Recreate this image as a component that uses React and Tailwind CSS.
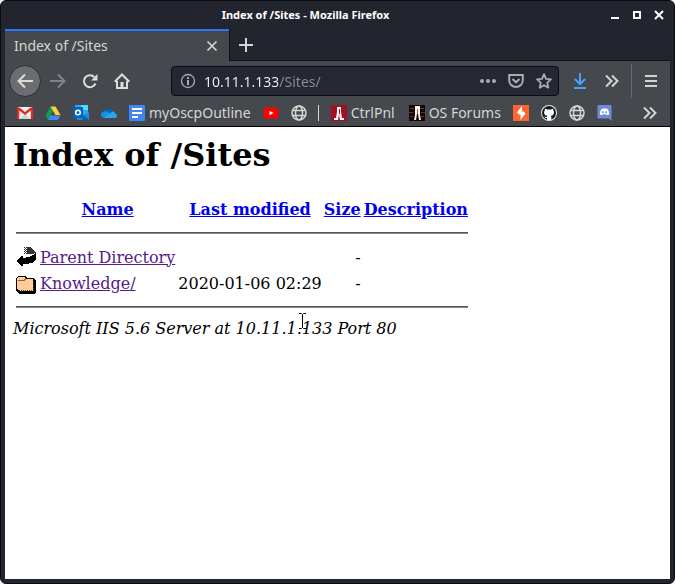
import React from "react";

const Gmail = () => (
  <svg width="16" height="16" viewBox="0 0 16 16">
    <path fill="#eceff1" d="M1 2h14v12H1z" />
    <path fill="#cfd3d6" d="M3 14l5-5 5 5z" />
    <path fill="#d93025" d="M1 2.500h1.500L8 7l5.500-4.500H15c.6 0 1 .4 1 1V14h-2.200V5.500L8 10 2.200 5.500V14H0V3.500c0-.6.4-1 1-1z" />
  </svg>
);
const Drive = () => (
  <svg width="16" height="16" viewBox="0 0 16 16">
    <path fill="#0f9d58" d="M5.500 1.500L8.200 6 3 15 .5 10.500z" />
    <path fill="#ffcd40" d="M5.500 1.500h5L15.500 10H10.500z" />
    <path fill="#4285f4" d="M5.500 10.500h10L13 15H3z" />
  </svg>
);
const Outlook = () => (
  <svg width="16" height="16" viewBox="0 0 16 16">
    <path fill="#28a8ea" d="M2 0h13v10H2z" />
    <path fill="#50d9ff" d="M8 0h7v5H8z" />
    <path fill="#1490df" d="M4 8l6 3 6-4v8H4z" />
    <path fill="#0a5fa8" d="M11 10l5 5H9z" />
    <rect y="2" width="10" height="11" rx="1" fill="#0364b8" />
    <circle cx="5" cy="7.500" r="2.300" fill="none" stroke="#fff" strokeWidth="1.500" />
  </svg>
);
const OneDrive = () => (
  <svg width="16" height="16" viewBox="0 0 16 16">
    <path fill="#0364b8" d="M3.500 6.500C5 3 10 2 12 6.500L8 10z" />
    <path fill="#1490df" d="M4 6.300c2-.5 4 1 6 2.200L4 13C1 13 0 11.500 0 9.700 0 8 1.500 6.300 4 6.300z" />
    <path fill="#28a8ea" d="M3 12.800L10 8c1-2 3.500-2 4 .5 3 .5 2.500 4.500 0 4.500H4z" />
  </svg>
);
const Docs = () => (
  <svg width="16" height="16" viewBox="0 0 16 16">
    <rect width="16" height="16" rx="1" fill="#4285f4" />
    <path stroke="#fff" strokeWidth="2" d="M3 4h10M3 8h10M3 12h6" />
  </svg>
);
const YouTube = () => (
  <svg width="16" height="16" viewBox="0 0 16 16">
    <rect x=".5" y="2.500" width="15" height="11" rx="3" fill="#f00" />
    <path fill="#fff" d="M6.500 5.800l4 2.200-4 2.200z" />
  </svg>
);
const Globe = () => (
  <svg width="16" height="16" viewBox="0 0 16 16" fill="none" stroke="#d6d7d3" strokeWidth="1.500">
    <circle cx="8" cy="8" r="7" />
    <ellipse cx="8" cy="8" rx="3.500" ry="7" />
    <path d="M1.500 5.500h13M1.500 10.500h13" />
  </svg>
);
const Tower = ({ dark }) => (
  <svg width="16" height="16" viewBox="0 0 16 16">
    <rect width="16" height="16" fill={dark ? "#160505" : "#a60f22"} />
    {dark && <path stroke="#6b3434" d="M1 3.500h4M11 3.500h4M0 7.500h4M12 7.500h4M1 11.500h3M12 11.500h3" />}
    {dark ? (
      <path fill="#f3f0ee" d="M6 1h5v9l1 5h-2l-1-6H8l-1 6H5l1-5z" />
    ) : (
      <path fill="#fff" d="M6 2h4v5l1 6h2v2H9l-1-6-1 6H3v-2h2l1-6z" />
    )}
    <path stroke={dark ? "#777" : "#a60f22"} d="M8.500 4v5" />
  </svg>
);
const Burp = () => (
  <svg width="16" height="16" viewBox="0 0 16 16">
    <rect width="16" height="16" fill="#ff6633" />
    <path fill="#fff" d="M9 1v5.500h1.500l2 2L7.500 15V9.500H6l-2-2z" />
  </svg>
);
const GitHub = () => (
  <svg width="16" height="16" viewBox="0 0 16 16">
    <circle cx="8" cy="8" r="8" fill="#e9eaea" />
    <circle cx="8" cy="8" r="7" fill="#191717" />
    <path fill="#fff" d="M4 3.500l2 1h4l2-1 .4 2c1.200 2 .6 5-2.600 5.300.5.600.6 1.200.6 4.200H6v-2c-1.500.2-2-.4-2.500-1.500.8 0 1.300.8 2.500.5l.3-1.200C3 10.500 2.500 7.500 3.700 5.500z" />
  </svg>
);
const Discord = () => (
  <svg width="16" height="16" viewBox="0 0 16 16">
    <path fill="#7289da" d="M2 0h11c1 0 1.500.6 1.500 1.500V16L12 13.500H2C1 13.500.5 13 .5 12V1.500C.5.6 1 0 2 0z" />
    <path fill="#fff" d="M4.500 4l2-.5h2l2 .5c1.200 1.600 1.700 3.500 1.600 5.200-.8.700-1.500.8-2.300.8l-.6-.8H5.800l-.6.8c-.8 0-1.600-.1-2.300-.8C2.800 7.500 3.300 5.600 4.500 4z" />
    <circle cx="5.800" cy="7.200" r="1" fill="#7289da" />
    <circle cx="9.200" cy="7.200" r="1" fill="#7289da" />
  </svg>
);
const Chevrons = () => (
  <svg width="16" height="16" viewBox="0 0 16 16" fill="none" stroke="#d3d4d2" strokeWidth="2">
    <path d="M2 2.500L7.500 8 2 13.500M8 2.500L13.500 8 8 13.500" />
  </svg>
);

const bookmarks = [
  { name: "Gmail", icon: <Gmail /> },
  { name: "Drive", icon: <Drive /> },
  { name: "Outlook", icon: <Outlook /> },
  { name: "OneDrive", icon: <OneDrive /> },
  { name: "Outline", icon: <Docs />, text: "myOscpOutline" },
  { name: "YouTube", icon: <YouTube /> },
  { name: "Website", icon: <Globe /> },
  { divider: true, name: "divider" },
  { name: "Control panel", icon: <Tower />, text: "CtrlPnl" },
  { name: "Forums", icon: <Tower dark />, text: "OS Forums" },
  { name: "Burp", icon: <Burp /> },
  { name: "GitHub", icon: <GitHub /> },
  { name: "Web page", icon: <Globe /> },
  { name: "Discord", icon: <Discord /> },
];

function TitleBar() {
  return (
    <header className="flex h-7 items-center">
      <h1 className="flex-1 text-center text-[11px] font-bold text-white">Index of /Sites - Mozilla Firefox</h1>
      <div className="flex w-16 shrink-0 justify-end gap-2 pr-1">
        <button aria-label="Minimize">
          <svg width="14" height="14" viewBox="0 0 14 14" stroke="#fff" strokeWidth="2"><path d="M3 10h8" /></svg>
        </button>
        <button aria-label="Maximize">
          <svg width="14" height="14" viewBox="0 0 14 14" fill="none" stroke="#fff" strokeWidth="2"><path d="M4 4h6v6H4z" /></svg>
        </button>
        <button aria-label="Close">
          <svg width="14" height="14" viewBox="0 0 14 14" stroke="#fff" strokeWidth="2"><path d="M3 3l8 8M11 3l-8 8" /></svg>
        </button>
      </div>
    </header>
  );
}

function Tabs() {
  return (
    <div className="flex h-8 text-[#d5d6d3]">
      <div className="flex w-56 items-center justify-between border-t-2 border-[#2a76f4] bg-[#45484d] pl-[9px] pr-2.5">
        <span className="text-sm">Index of /Sites</span>
        <button aria-label="Close tab">
          <svg width="14" height="14" viewBox="0 0 14 14" stroke="#d5d6d3" strokeWidth="1.700"><path d="M2.500 2.500l9 9M11.500 2.500l-9 9" /></svg>
        </button>
      </div>
      <div className="flex flex-1 items-center border-b border-l border-[#101116] pl-2">
        <button aria-label="New tab">
          <svg width="16" height="16" viewBox="0 0 16 16" stroke="#d5d6d3" strokeWidth="2"><path d="M1 8h14M8 1v14" /></svg>
        </button>
      </div>
    </div>
  );
}

function NavBar() {
  return (
    <div className="flex h-10 items-center pl-1 pr-[3px]">
      <button aria-label="Back" className="mr-px flex size-8 items-center justify-center rounded-full border border-[#2d2f34] bg-[#6b6d71]">
        <svg width="16" height="16" viewBox="0 0 16 16" fill="none" stroke="#deded9" strokeWidth="2"><path d="M16 8H1.500M8 1.500L1.500 8 8 14.500" /></svg>
      </button>
      <button aria-label="Forward" className="flex size-8 items-center justify-center">
        <svg width="16" height="16" viewBox="0 0 16 16" fill="none" stroke="#818386" strokeWidth="2"><path d="M0 8h14.500M8 1.500L14.500 8 8 14.500" /></svg>
      </button>
      <button aria-label="Reload" className="flex size-8 items-center justify-center">
        <svg width="16" height="16" viewBox="0 0 16 16" fill="none" stroke="#deded9" strokeWidth="2"><path d="M13.500 10.500A6 6 0 1 1 12.300 4" /><path fill="#deded9" stroke="none" d="M15.500 1v6.500H9z" /></svg>
      </button>
      <button aria-label="Home" className="flex size-8 items-center justify-center">
        <svg width="16" height="16" viewBox="0 0 16 16" fill="none" stroke="#deded9" strokeWidth="2"><path d="M.7 8.700L8 1.500l7.300 7.200M3 8v7h10V8" /><path fill="#deded9" stroke="none" d="M6.500 9h3v6h-3z" /></svg>
      </button>
      <div className="ml-[33px] flex h-[30px] flex-1 items-center rounded border border-[#0b0c10] bg-[#252733] pl-2 pr-[6px]">
        <svg className="shrink-0" width="16" height="16" viewBox="0 0 16 16" fill="none" stroke="#a9abad" strokeWidth="1.300"><circle cx="8" cy="8" r="6.500" /><path strokeWidth="2" d="M8 4v2M8 7v5" /></svg>
        <input
          aria-label="Address"
          defaultValue="10.11.1.133/Sites/"
          className="ml-2 h-6 w-0 min-w-0 flex-1 bg-[linear-gradient(90deg,#f4f4f4_74px,#8c8e93_74px)] bg-clip-text text-sm text-transparent outline-none"
        />
        <div className="flex gap-3">
          <button aria-label="Page actions">
            <svg width="16" height="16" viewBox="0 0 16 16" fill="#aaacad"><circle cx="2" cy="8" r="2" /><circle cx="8" cy="8" r="2" /><circle cx="14" cy="8" r="2" /></svg>
          </button>
          <button aria-label="Save to Pocket">
            <svg width="16" height="16" viewBox="0 0 16 16" fill="none" stroke="#aaacad" strokeWidth="2"><path d="M1.200 2h13.600v5.500a6.800 6.500 0 0 1-13.600 0zM4.500 6L8 9.300 11.500 6" /></svg>
          </button>
          <button aria-label="Bookmark">
            <svg width="16" height="16" viewBox="0 0 16 16" fill="none" stroke="#aaacad" strokeWidth="1.800"><path strokeLinejoin="round" d="M8 1.200l2 4.600 5 .5-3.700 3.400 1 5L8 12.200l-4.300 2.500 1-5L1 6.300l5-.5z" /></svg>
          </button>
        </div>
      </div>
      <div className="flex items-center pl-[5px]">
        <button aria-label="Downloads" className="flex size-8 items-center justify-center">
          <svg width="16" height="16" viewBox="0 0 16 16" fill="none" stroke="#45a1ff" strokeWidth="2"><path d="M8 0v11M2.800 6L8 11l5.200-5M2 15h12" /></svg>
        </button>
        <button aria-label="More tools" className="flex size-8 items-center justify-center"><Chevrons /></button>
        <div className="mx-[3px] h-[34px] w-px bg-[#67696d]" />
        <button aria-label="Menu" className="flex size-8 items-center justify-center">
          <svg width="16" height="16" viewBox="0 0 16 16" stroke="#d3d4d2" strokeWidth="2"><path d="M2 3h12M2 8h12M2 13h12" /></svg>
        </button>
      </div>
    </div>
  );
}

function BookmarksBar() {
  return (
    <nav className="flex h-[25px] items-center pb-px pl-1.5 pr-3 text-sm text-[#d5d6d3]">
      {bookmarks.map((b) =>
        b.divider ? (
          <div key={b.name} className="flex w-3 justify-center">
            <div className="h-4 w-px bg-[#d5d6d3]" />
          </div>
        ) : (
          <a key={b.name} href="#" aria-label={b.text || b.name} className="flex shrink-0 items-center gap-1 px-1.5">
            {b.icon}
            {b.text && <span className="min-w-[46px] whitespace-nowrap">{b.text}</span>}
          </a>
        )
      )}
      <button aria-label="More bookmarks" className="ml-auto"><Chevrons /></button>
    </nav>
  );
}

const BackIcon = () => (
  <svg width="20" height="22" viewBox="0 0 20 22" shapeRendering="crispEdges">
    <path fill="#333" d="M11 1h3l3 2 3 4-4 1H11z" />
    <path stroke="#333" strokeDasharray="1 1" d="M8.500 1v7M10.500 1v7" />
    <path stroke="#333" strokeDasharray="1 1" d="M9.500 2v6" />
    <path d="M20 7v7l-4 3-6 1H7v2H5l-5-5 5-5h2v2l6-1 4-2z" />
  </svg>
);
const FolderIcon = () => (
  <svg width="20" height="22" viewBox="0 0 20 22" shapeRendering="crispEdges">
    <path d="M2 4h7l2 2h7l2 3v11l-2 2H3l-3-3V6z" />
    <path fill="#ffcc99" d="M2 5h6l2 2h7v12H3l-2-2V7z" />
    <path stroke="#996633" fill="none" d="M2 8.500h6l2-2" />
    <path stroke="#664422" fill="none" strokeDasharray="1 1" d="M3 18.500h14.500V9" />
  </svg>
);

const columns = [
  { name: "Name", pad: "p-px" },
  { name: "Last modified", pad: "py-px" },
  { name: "Size", pad: "py-px" },
  { name: "Description", pad: "p-px" },
];
const rows = [
  { icon: <BackIcon />, name: "Parent Directory", modified: "", size: "-" },
  { icon: <FolderIcon />, name: "Knowledge/", modified: "2020-01-06 02:29", size: "-" },
];

function Rule() {
  return (
    <tr>
      <td colSpan={5} className="p-px">
        <hr className="my-2 h-0.5 border-t border-b border-t-[#555] border-b-[#888]" />
      </td>
    </tr>
  );
}

function Listing() {
  return (
    <main className="relative flex-1 bg-white px-2 pt-2.5 font-['DejaVu_Serif',serif] text-base/[19px] text-black">
      <h1 className="mb-[21px] text-[32px]/[37px] font-bold">Index of /Sites</h1>
      <table className="border-separate border-spacing-0.5">
        <tbody>
          <tr className="h-6">
            <th className="w-[22px] p-px" />
            {columns.map((c) => (
              <th key={c.name} className={c.pad}>
                <a href="#" className="text-[#0000ee] underline">{c.name}</a>
              </th>
            ))}
          </tr>
          <Rule />
          {rows.map((r) => (
            <tr key={r.name} className="h-6">
              <td className="p-px">{r.icon}</td>
              <td className="p-px"><a href="#" className="text-[#551a8b] underline">{r.name}</a></td>
              <td className="py-px text-right">{r.modified}</td>
              <td className="py-px text-right">{r.size}</td>
              <td className="p-px" />
            </tr>
          ))}
          <Rule />
        </tbody>
      </table>
      <address>Microsoft IIS 5.6 Server at 10.11.1.133 Port 80</address>
      <svg className="absolute left-[292px] top-[185px]" width="11" height="18" viewBox="0 0 11 18" fill="none">
        <path stroke="#fff" strokeWidth="3" d="M2 1.500h2.500l1 1 1-1H9M5.500 2.500v13M2 16.500h2.500l1-1 1 1H9" />
        <path stroke="#000" d="M2 1.500h2.500l1 1 1-1H9M5.500 2.500v13M2 16.500h2.500l1-1 1 1H9" />
      </svg>
    </main>
  );
}

export default function App() {
  return (
    <div className="min-h-screen bg-white font-['Noto_Sans',sans-serif]">
      <div className="flex min-h-screen flex-col rounded-md border border-[#0b0c12] bg-[#23252e] px-1 pb-1">
        <TitleBar />
        <Tabs />
        <div className="border-b border-black bg-[#45484d]">
          <NavBar />
          <BookmarksBar />
        </div>
        <Listing />
      </div>
    </div>
  );
}
